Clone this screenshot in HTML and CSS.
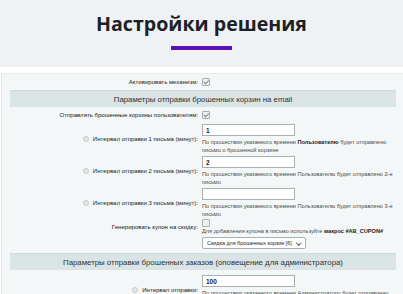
FILE: index.html
```
<!DOCTYPE html>
<html lang="ru">

<head>
    <meta charset="UTF-8">
    <meta name="viewport" content="width=device-width, initial-scale=1.0">
    <title>Настройки решения</title>
    <link rel="stylesheet" href="styles.css">
</head>

<body>

    <div class="page-head">
        <h1>Настройки решения</h1>
        <div class="title-line"></div>
    </div>

    <div class="panel">
        <table class="settings">
            <colgroup>
                <col class="col-label">
                <col>
            </colgroup>
            <tr class="row-check">
                <td class="label">Активировать механизм:</td>
                <td class="value"><span class="box checked"></span></td>
            </tr>
            <tr class="heading">
                <td colspan="2">Параметры отправки брошенных корзин на email</td>
            </tr>
            <tr class="row-check">
                <td class="label">Отправлять брошенные корзины пользователям:</td>
                <td class="value"><span class="box checked"></span></td>
            </tr>
            <tr>
                <td class="label"><span class="hint"></span>Интервал отправки 1 письма (минут):</td>
                <td class="value">
                    <input type="text" class="field" value="1">
                    <div class="note">По прошествии указанного времени <b>Пользователю</b> будет отправлено письмо о брошенной корзине</div>
                </td>
            </tr>
            <tr>
                <td class="label"><span class="hint"></span>Интервал отправки 2 письма (минут):</td>
                <td class="value">
                    <input type="text" class="field" value="2">
                    <div class="note">По прошествии указанного времени Пользователю будет отправлено 2&#8209;е письмо</div>
                </td>
            </tr>
            <tr>
                <td class="label"><span class="hint"></span>Интервал отправки 3 письма (минут):</td>
                <td class="value">
                    <input type="text" class="field" value="">
                    <div class="note">По прошествии указанного времени Пользователю будет отправлено 3&#8209;е письмо</div>
                </td>
            </tr>
            <tr class="row-coupon">
                <td class="label">Генерировать купон на скидку:</td>
                <td class="value">
                    <span class="box"></span>
                    <div class="note">Для добавления купона в письмо используйте <b>макрос #AB_CUPON#</b></div>
                </td>
            </tr>
            <tr class="row-select">
                <td class="label"></td>
                <td class="value">
                    <div class="select">Скидка для брошенных корзин [6] <span class="arrow"></span></div>
                </td>
            </tr>
            <tr class="heading">
                <td colspan="2">Параметры отправки брошенных заказов (оповещение для администратора)</td>
            </tr>
            <tr class="row-last">
                <td class="label"><span class="hint"></span>Интервал отправки:</td>
                <td class="value">
                    <input type="text" class="field" value="100">
                    <div class="note">По прошествии указанного времени Администратору будет отправлено письмо</div>
                </td>
            </tr>
        </table>
    </div>

</body>

</html>
```

FILE: styles.css
```
body {
    margin: 0;
    padding: 0;
    font-family: "Liberation Sans", Arial, sans-serif;
    background-color: #fff;
    color: #222;
}

.page-head {
    background-color: #eef2f4;
    height: 67px;
    padding-top: 9px;
    box-sizing: border-box;
    text-align: center;
}

.page-head h1 {
    margin: 0;
    font-family: "Open Sans", sans-serif;
    font-weight: 700;
    font-size: 19.6px;
    line-height: 30px;
    color: #1d2125;
}

.title-line {
    width: 61px;
    height: 4px;
    margin: 7px auto 0;
    background-color: #5e12b5;
}

.panel {
    margin-top: 6px;
    margin-left: 1px;
    background-color: #f4f7f7;
    border-left: 1px solid #e1e7e7;
    border-top: 1px solid #e6ebeb;
    padding: 0 8px 0 8px;
}

.settings {
    width: 386px;
    table-layout: fixed;
    border-collapse: collapse;
    font-size: 6.05px;
}

.col-label {
    width: 192px;
}

.settings td {
    padding: 1px 0;
    vertical-align: middle;
}

.settings .label {
    text-align: right;
    padding-right: 4px;
    color: #1a1a1a;
    white-space: nowrap;
}

.settings .value {
    text-align: left;
}

.row-check td {
    height: 12px;
    padding: 2px 0;
}

.row-coupon td {
    padding: 0;
}

.row-select td {
    padding: 2px 0 4px;
}

.row-last td {
    padding-top: 5px;
}

.heading td {
    background-color: #dae4e4;
    text-align: center;
    font-size: 7.8px;
    color: #2c3336;
    height: 12px;
    padding: 2px 0;
    border-top: 1px solid #d0dcdc;
}

.box {
    display: inline-block;
    width: 6px;
    height: 6px;
    border: 1px solid #a8b0b0;
    background-color: #eef0f0;
    border-radius: 1px;
    position: relative;
    vertical-align: middle;
}

.box.checked::after {
    content: "";
    position: absolute;
    left: 2px;
    top: 0;
    width: 1.5px;
    height: 3.5px;
    border: solid #7f8a8a;
    border-width: 0 1px 1px 0;
    transform: rotate(45deg);
}

.hint {
    display: inline-block;
    width: 4px;
    height: 4px;
    border-radius: 50%;
    border: 1px solid #c5caca;
    background-color: #e3e6e6;
    margin-right: 4px;
    vertical-align: middle;
}

.field {
    display: block;
    width: 93px;
    height: 12px;
    box-sizing: border-box;
    border: 1px solid #a9b0b0;
    padding: 0 3px;
    font-family: "Liberation Sans", Arial, sans-serif;
    font-size: 6.5px;
    font-weight: 700;
    color: #222;
    background-color: #fff;
    margin: 0 0 2px;
}

.note {
    color: #4a4a4a;
    font-size: 5.6px;
    line-height: 8px;
    width: 198px;
}

.note b {
    color: #222;
}

.select {
    display: inline-block;
    border: 1px solid #a9b0b0;
    border-radius: 2px;
    background-color: #fff;
    height: 12px;
    line-height: 11px;
    padding: 0 4px;
    box-sizing: border-box;
    font-size: 5.4px;
    color: #222;
}

.arrow {
    display: inline-block;
    width: 2.5px;
    height: 2.5px;
    border: solid #555;
    border-width: 0 1px 1px 0;
    transform: rotate(45deg);
    margin-left: 4px;
    vertical-align: 1px;
}
```
